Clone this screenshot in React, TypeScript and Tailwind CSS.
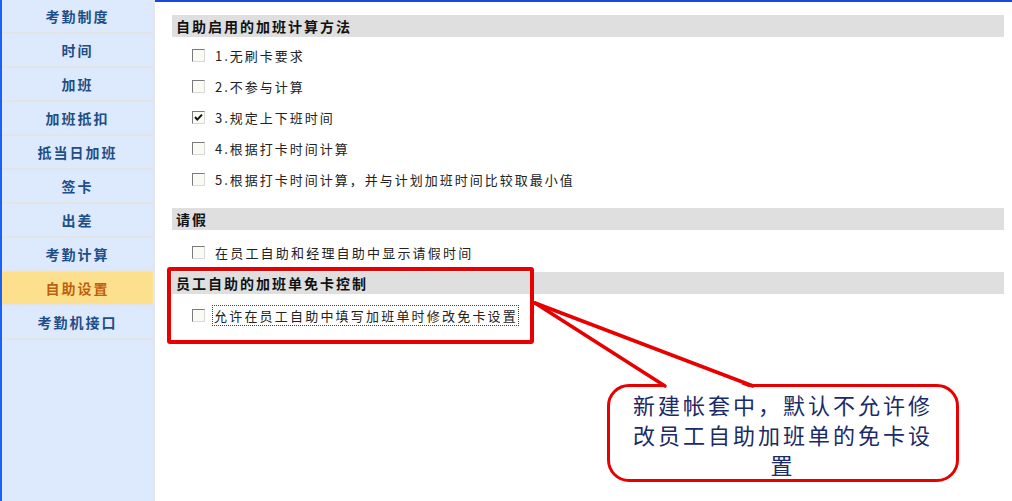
import React from "react";

type Row = { label: string; checked?: boolean; track: string; focus?: boolean };

const menu = [
  "考勤制度",
  "时间",
  "加班",
  "加班抵扣",
  "抵当日加班",
  "签卡",
  "出差",
  "考勤计算",
  "自助设置",
  "考勤机接口",
];

function CheckBox({ checked }: { checked?: boolean }) {
  return (
    <span className="relative w-[13px] h-[13px] shrink-0 border border-t-[#7a7a7a] border-l-[#7a7a7a] border-b-[#d8d8d8] border-r-[#d8d8d8] bg-[#fbfbf6]">
      {checked && (
        <svg viewBox="0 0 11 11" className="absolute left-0 top-0 w-[11px] h-[11px]">
          <path d="M2 5 L4.3 7.6 L9 2.6" fill="none" stroke="#111" strokeWidth="2" />
        </svg>
      )}
    </span>
  );
}

function Header({ title }: { title: string }) {
  return (
    <div className="h-[22px] bg-[#dfdfdf] pl-[4px] flex items-center text-[14px] font-bold tracking-[2px] text-[#111]">
      {title}
    </div>
  );
}

function OptionRow({ label, checked, track, focus }: Row) {
  return (
    <div className="h-[31px] flex items-center pl-[20px] gap-[10px]">
      <CheckBox checked={checked} />
      <span
        className={`text-[13px] text-[#222] ${track} ${
          focus ? "outline outline-1 outline-dotted outline-[#444] -ml-[2px] pl-[1px]" : ""
        }`}
      >
        {label}
      </span>
    </div>
  );
}

export default function App() {
  return (
    <div className="relative w-[1012px] h-[501px] flex bg-white overflow-hidden font-['Noto_Sans_CJK_SC',sans-serif]">
      <div className="w-[155px] h-full shrink-0 border-l-2 border-l-[#1a62f5] border-r-2 border-r-[#e4e6ea] bg-[#dde9fc]">
        {menu.map((m) => (
          <div
            key={m}
            className={`h-[34px] border-b-2 border-[#e2e4e6] flex items-center justify-center text-[14px] font-bold tracking-[2px] ${
              m === "自助设置" ? "bg-[#fde08e] text-[#c05f0c]" : "text-[#1d4f86]"
            }`}
          >
            {m}
          </div>
        ))}
      </div>

      <div className="flex-1 h-full border-t-2 border-[#1846dc] pl-[17px] pr-[8px] pt-[13px]">
        <Header title="自助启用的加班计算方法" />
        <div className="mt-[3px]">
          <OptionRow label="1.无刷卡要求" track="tracking-[2px]" />
          <OptionRow label="2.不参与计算" track="tracking-[2px]" />
          <OptionRow label="3.规定上下班时间" checked track="tracking-[2px]" />
          <OptionRow label="4.根据打卡时间计算" track="tracking-[2px]" />
          <OptionRow label="5.根据打卡时间计算，并与计划加班时间比较取最小值" track="tracking-[2px]" />
        </div>

        <div className="mt-[13px]">
          <Header title="请假" />
        </div>
        <div className="mt-[7px]">
          <OptionRow label="在员工自助和经理自助中显示请假时间" track="tracking-[2.2px]" />
        </div>

        <div className="mt-[4px]">
          <Header title="员工自助的加班单免卡控制" />
        </div>
        <div className="mt-[6px]">
          <OptionRow label="允许在员工自助中填写加班单时修改免卡设置" track="tracking-[2.2px]" focus />
        </div>
      </div>

      {/* annotation: highlight box */}
      <div className="absolute left-[167px] top-[267px] w-[367px] h-[77px] border-4 border-[#e80000] rounded-[3px]" />

      {/* annotation: callout */}
      <div className="absolute left-[607px] top-[384px] w-[352px] h-[98px] border-[3px] border-[#e80000] rounded-[22px] bg-white flex flex-col items-center justify-center pt-[2px] text-[22px] leading-[30px] tracking-[3px] text-[#1b2a68]">
        <span>新建帐套中，默认不允许修</span>
        <span>改员工自助加班单的免卡设</span>
        <span>置</span>
      </div>
      <svg
        className="absolute left-0 top-0 pointer-events-none"
        width="1012"
        height="501"
        viewBox="0 0 1012 501"
      >
        <polygon points="667,388 535,303 751,388" fill="#fff" />
        <line x1="665" y1="386" x2="535" y2="303" stroke="#e80000" strokeWidth="3.5" strokeLinecap="round" />
        <line x1="535" y1="303" x2="753" y2="386" stroke="#e80000" strokeWidth="3.5" strokeLinecap="round" />
      </svg>
    </div>
  );
}
